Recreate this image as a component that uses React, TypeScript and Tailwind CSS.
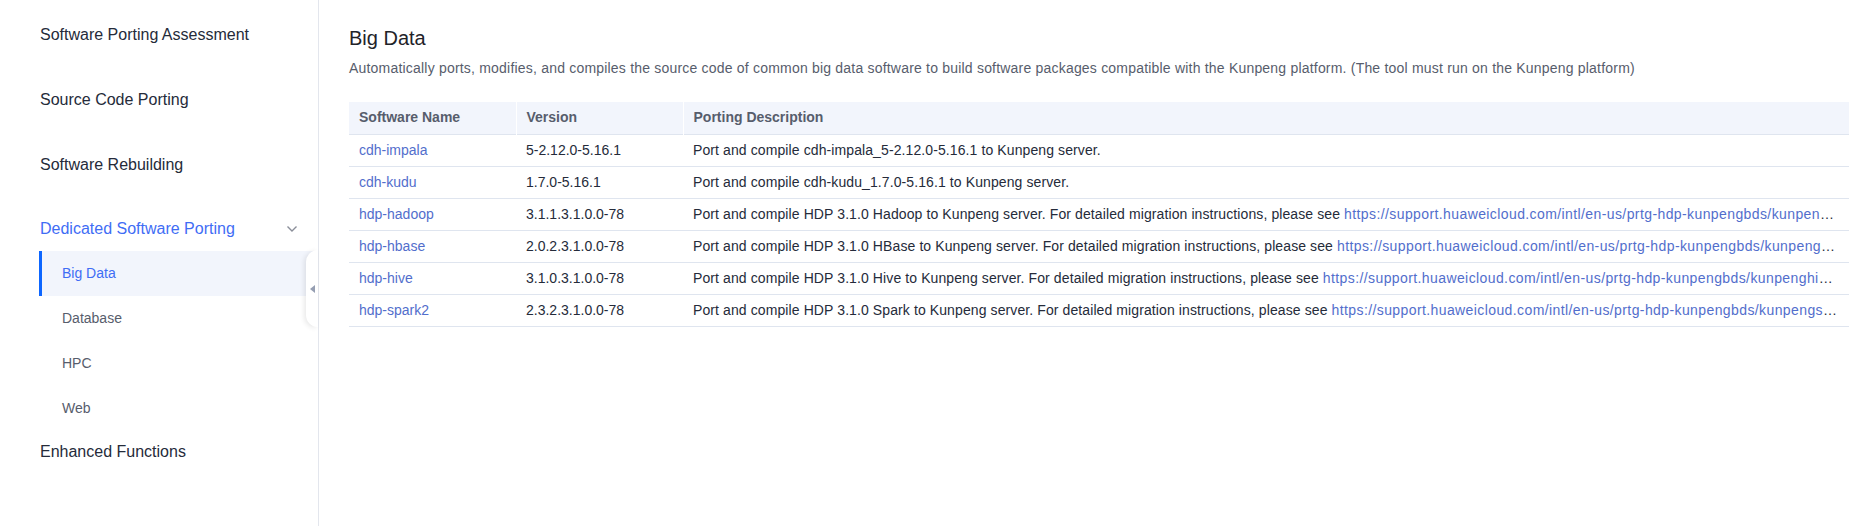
import React from "react";

const rows = [
  { name: "cdh-impala", version: "5-2.12.0-5.16.1", desc: "Port and compile cdh-impala_5-2.12.0-5.16.1 to Kunpeng server.", url: "" },
  { name: "cdh-kudu", version: "1.7.0-5.16.1", desc: "Port and compile cdh-kudu_1.7.0-5.16.1 to Kunpeng server.", url: "" },
  {
    name: "hdp-hadoop",
    version: "3.1.1.3.1.0.0-78",
    desc: "Port and compile HDP 3.1.0 Hadoop to Kunpeng server. For detailed migration instructions, please see ",
    url: "https://support.huaweicloud.com/intl/en-us/prtg-hdp-kunpengbds/kunpenghadoop_02_0001.html",
  },
  {
    name: "hdp-hbase",
    version: "2.0.2.3.1.0.0-78",
    desc: "Port and compile HDP 3.1.0 HBase to Kunpeng server. For detailed migration instructions, please see ",
    url: "https://support.huaweicloud.com/intl/en-us/prtg-hdp-kunpengbds/kunpenghbase_02_0001.html",
  },
  {
    name: "hdp-hive",
    version: "3.1.0.3.1.0.0-78",
    desc: "Port and compile HDP 3.1.0 Hive to Kunpeng server. For detailed migration instructions, please see ",
    url: "https://support.huaweicloud.com/intl/en-us/prtg-hdp-kunpengbds/kunpenghive_02_0001.html",
  },
  {
    name: "hdp-spark2",
    version: "2.3.2.3.1.0.0-78",
    desc: "Port and compile HDP 3.1.0 Spark to Kunpeng server. For detailed migration instructions, please see ",
    url: "https://support.huaweicloud.com/intl/en-us/prtg-hdp-kunpengbds/kunpengspark_02_0001.html",
  },
];

export default function App() {
  return (
    <div
      className="flex h-[526px] w-full bg-white overflow-hidden"
      style={{ fontFamily: '"Liberation Sans", Arial, sans-serif' }}
    >
      {/* Sidebar */}
      <aside className="relative w-[319px] shrink-0 border-r border-[#e3e6ed] pt-[13px]">
        <div className="flex h-[44px] items-center pl-[40px] text-[16px] text-[#252b3a]">Software Porting Assessment</div>
        <div className="mt-[21px] flex h-[44px] items-center pl-[40px] text-[16px] text-[#252b3a]">Source Code Porting</div>
        <div className="mt-[21px] flex h-[44px] items-center pl-[40px] text-[16px] text-[#252b3a]">Software Rebuilding</div>
        <div className="mt-[20px] flex h-[44px] items-center justify-between pl-[40px] pr-[20px] text-[16px] text-[#3f6df5]">
          <span>Dedicated Software Porting</span>
          <svg width="12" height="8" viewBox="0 0 12 8" fill="none">
            <path d="M1.5 1.5 L6 6 L10.5 1.5" stroke="#8a8e99" strokeWidth="1.4" />
          </svg>
        </div>
        <div className="ml-[39px] flex h-[45px] items-center border-l-[3px] border-[#0d66ff] bg-[#f2f5fc] pl-[20px] text-[14px] text-[#3f6df5]">
          Big Data
        </div>
        <div className="flex h-[45px] items-center pl-[62px] text-[14px] text-[#575d6c]">Database</div>
        <div className="flex h-[45px] items-center pl-[62px] text-[14px] text-[#575d6c]">HPC</div>
        <div className="flex h-[45px] items-center pl-[62px] text-[14px] text-[#575d6c]">Web</div>
        <div className="flex h-[42px] items-center pl-[40px] text-[16px] text-[#252b3a]">Enhanced Functions</div>

        {/* collapse handle */}
        <div className="absolute right-0 top-[250px] flex h-[77px] w-[12px] items-center justify-center rounded-l-[14px] bg-white shadow-[-2px_1px_5px_rgba(0,0,0,0.09)]">
          <svg width="5" height="8" viewBox="0 0 5 8" className="ml-[1px]">
            <path d="M5 0 L0 4 L5 8 Z" fill="#959eb2" />
          </svg>
        </div>
      </aside>

      {/* Main */}
      <main className="min-w-0 flex-1 pl-[30px] pr-[5px]">
        <h1 className="mt-[24px] h-[28px] text-[20px] leading-[28px] text-[#1f2329]">Big Data</h1>
        <p className="mt-[5px] text-[14px] leading-[22px] tracking-[0.2px] text-[#575d6c]">
          Automatically ports, modifies, and compiles the source code of common big data software to build software packages compatible with the Kunpeng platform. (The tool must run on the Kunpeng platform)
        </p>
        <table className="mt-[23px] w-full table-fixed border-collapse text-[14px]">
          <colgroup>
            <col className="w-[167px]" />
            <col className="w-[167px]" />
            <col />
          </colgroup>
          <thead>
            <tr className="h-[32px] border-b border-[#dfe5ef] bg-[#f2f5fc] text-left text-[#575d6c]">
              <th className="border-r border-white px-[10px] font-semibold">Software Name</th>
              <th className="border-r border-white px-[10px] font-semibold">Version</th>
              <th className="px-[10px] font-semibold">Porting Description</th>
            </tr>
          </thead>
          <tbody>
            {rows.map((r) => (
              <tr key={r.name} className="h-[32px] border-b border-[#dfe5ef] text-[#252b3a]">
                <td className="px-[10px]">
                  <span className="text-[#526ecc]">{r.name}</span>
                </td>
                <td className="px-[10px]">{r.version}</td>
                <td className="overflow-hidden text-ellipsis whitespace-nowrap px-[10px] tracking-[0.1px]">
                  {r.desc}
                  {r.url && <span className="tracking-[0.4px] text-[#526ecc]">{r.url}</span>}
                </td>
              </tr>
            ))}
          </tbody>
        </table>
      </main>
    </div>
  );
}
